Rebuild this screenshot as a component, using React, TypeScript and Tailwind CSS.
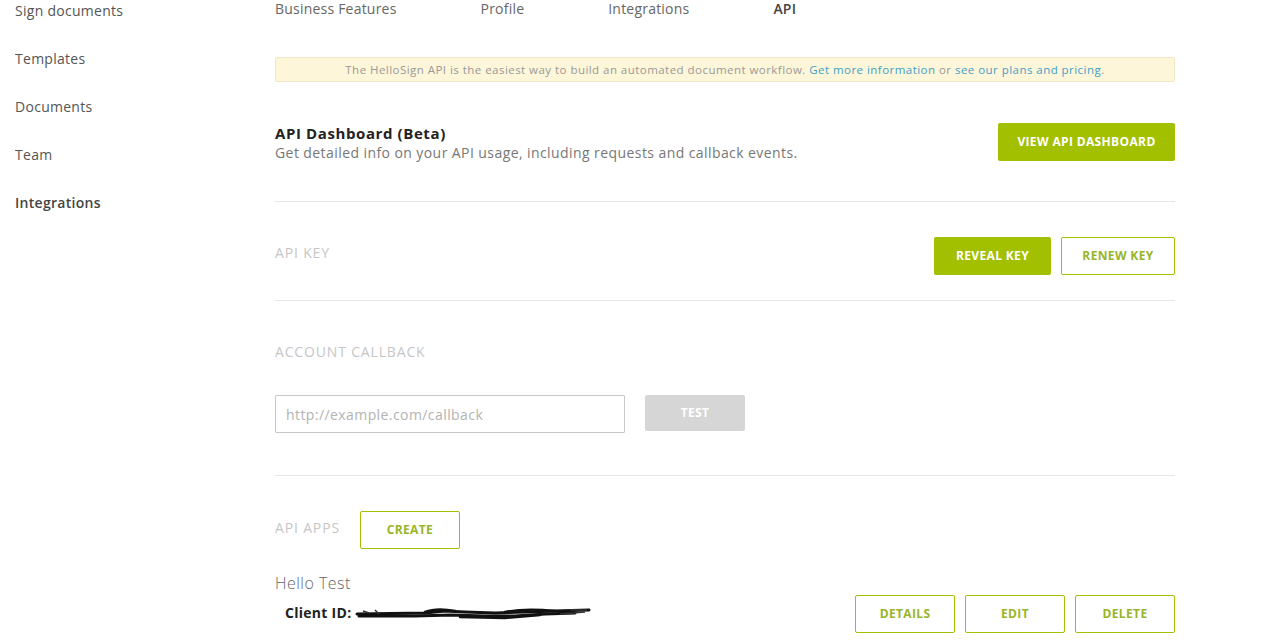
import React from "react";

const green = "bg-[#a3c000]";

function OutlineBtn({ children, className = "" }: { children: React.ReactNode; className?: string }) {
  return (
    <button
      className={`h-[38px] rounded-[2px] border border-[#a3c000] bg-white text-[12px] font-bold uppercase tracking-[0.03em] text-[#98b52a] ${className}`}
    >
      {children}
    </button>
  );
}

function SectionLabel({ children }: { children: React.ReactNode }) {
  return <div className="text-[14px] uppercase leading-[17px] tracking-[0.06em] text-[#c6c6c6]">{children}</div>;
}

const sideItems = ["Sign documents", "Templates", "Documents", "Team", "Integrations"];
const tabs = ["Business Features", "Profile", "Integrations", "API"];

export default function App() {
  return (
    <div className="flex h-[643px] w-[1265px] overflow-hidden bg-white font-['Open_Sans',sans-serif] text-[#444]">
      {/* sidebar */}
      <nav className="flex w-[275px] shrink-0 flex-col gap-[31px] pl-[15px] pt-[2px]">
        {sideItems.map((s) => (
          <div
            key={s}
            className={`text-[14px] leading-[17px] tracking-[0.02em] ${s === "Integrations" ? "font-semibold text-[#444]" : "text-[#555]"}`}
          >
            {s}
          </div>
        ))}
      </nav>

      <main className="w-[900px] shrink-0">
        <div className="flex gap-[84px] text-[14px] leading-[17px] tracking-[0.015em] text-[#666]">
          {tabs.map((t) => (
            <span key={t} className={t === "API" ? "font-semibold text-[#444]" : ""}>
              {t}
            </span>
          ))}
        </div>

        <div className="mt-[40px] flex h-[25px] items-center justify-center rounded-[2px] border border-[#f1e7c4] bg-[#fdf6d9] text-[11.5px] tracking-[0.04em] text-[#999]">
          <span>
            The HelloSign API is the easiest way to build an automated document workflow.{" "}
            <span className="text-[#3ea0c9]">Get more information</span> or{" "}
            <span className="text-[#3ea0c9]">see our plans and pricing</span>.
          </span>
        </div>

        <div className="mt-[41px] flex items-center justify-between border-b border-[#e6e6e6] pb-[40px]">
          <div className="pt-[1px]">
            <div className="text-[15px] font-bold leading-[17px] tracking-[0.04em] text-[#222]">API Dashboard (Beta)</div>
            <div className="mt-[2px] text-[14px] leading-[17px] tracking-[0.03em] text-[#777]">
              Get detailed info on your API usage, including requests and callback events.
            </div>
          </div>
          <button className={`h-[38px] w-[177px] rounded-[2px] ${green} text-[12px] font-bold tracking-[0.03em] text-white`}>
            VIEW API DASHBOARD
          </button>
        </div>

        <div className="flex items-center justify-between border-b border-[#e6e6e6] pb-[25px] pt-[35px]">
          <div className="-mt-[8px]">
            <SectionLabel>API Key</SectionLabel>
          </div>
          <div className="flex gap-[10px]">
            <button className={`h-[38px] w-[117px] rounded-[2px] ${green} text-[12px] font-bold tracking-[0.03em] text-white`}>
              REVEAL KEY
            </button>
            <OutlineBtn className="w-[114px]">Renew Key</OutlineBtn>
          </div>
        </div>

        <div className="border-b border-[#e6e6e6] pb-[42px] pt-[42px]">
          <SectionLabel>Account Callback</SectionLabel>
          <div className="mt-[35px] flex items-start gap-[20px]">
            <input
              placeholder="http://example.com/callback"
              className="h-[38px] w-[350px] rounded-[1px] border border-[#c8c8c8] px-[10px] text-[14px] tracking-[0.03em] text-[#444] outline-none placeholder:text-[#b3b3b3]"
            />
            <button className="h-[36px] w-[100px] rounded-[2px] bg-[#d6d6d6] text-[12px] font-bold tracking-[0.03em] text-white">
              TEST
            </button>
          </div>
        </div>

        <div className="flex items-center gap-[20px] pt-[35px]">
          <div className="-mt-[5px]">
            <SectionLabel>API Apps</SectionLabel>
          </div>
          <OutlineBtn className="w-[100px]">Create</OutlineBtn>
        </div>

        <div className="mt-[25px] text-[16px] font-light leading-[19px] tracking-[0.03em] text-[#666]">Hello Test</div>
        <div className="flex items-start justify-between">
          <div className="mt-[11px] flex items-center pl-[10px]">
            <span className="text-[14px] font-bold leading-[17px] tracking-[0.02em] text-[#222]">Client ID:</span>
            <svg width="236" height="14" viewBox="0 0 236 14" className="ml-[4px]">
              <path d="M2 8 L70 7 L90 5 L110 6 L140 7 L170 6 L200 5 L234 4" stroke="#111" strokeWidth="3" fill="none" strokeLinecap="round" />
              <path d="M4 10 L60 10 L96 9 L130 10 L160 10 L190 8 L220 7" stroke="#111" strokeWidth="3" fill="none" strokeLinecap="round" />
              <path d="M70 6 C80 2 90 3 100 5 M150 6 C165 3 180 3 200 5 M105 11 L150 12 L185 9" stroke="#111" strokeWidth="2.5" fill="none" strokeLinecap="round" />
              <path d="M8 5 L14 7 M20 4 L24 8 M205 8 L230 6 M215 4 L232 4" stroke="#333" strokeWidth="1.5" fill="none" />
            </svg>
          </div>
          <div className="mt-[2px] flex gap-[10px]">
            <OutlineBtn className="w-[100px]">Details</OutlineBtn>
            <OutlineBtn className="w-[100px]">Edit</OutlineBtn>
            <OutlineBtn className="w-[100px]">Delete</OutlineBtn>
          </div>
        </div>
      </main>
    </div>
  );
}
